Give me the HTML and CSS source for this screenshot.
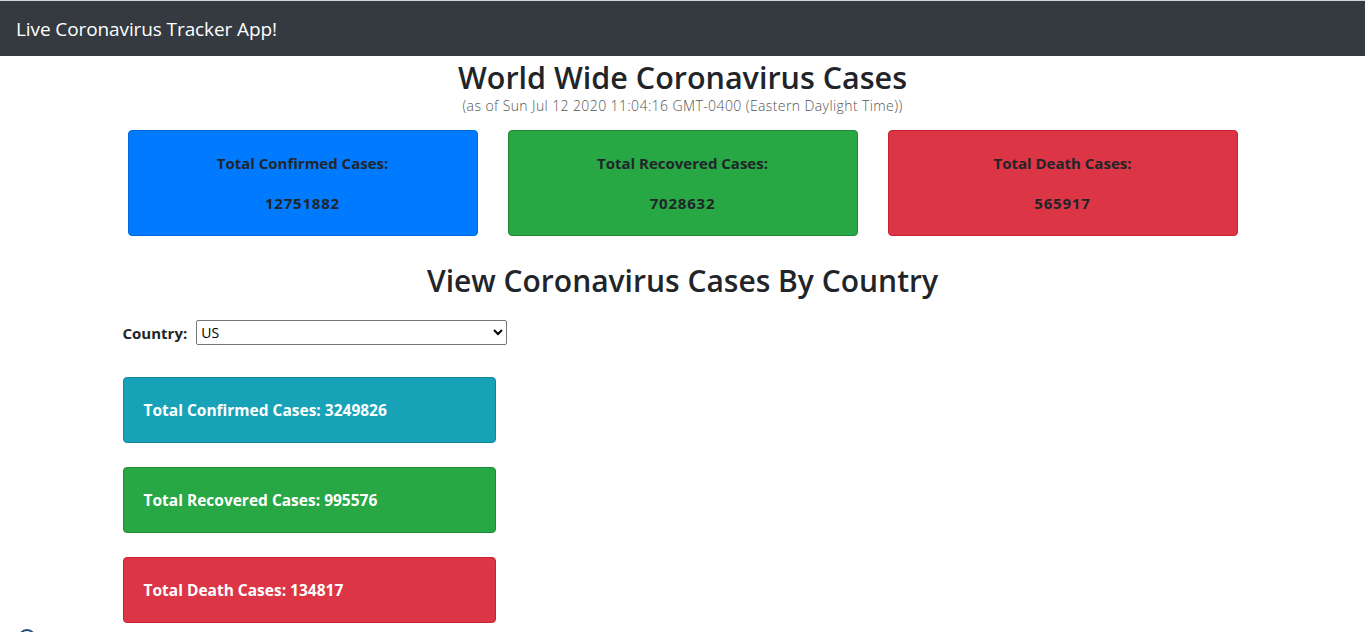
FILE: index.html
```html
<!DOCTYPE html>
<html lang="en">
<head>
<meta charset="utf-8">
<title>Live Coronavirus Tracker App!</title>
<link rel="stylesheet" href="styles.css">
</head>
<body>
<nav class="navbar">
  <span class="brand">Live Coronavirus Tracker App!</span>
</nav>
<main class="container">
  <header class="world-head">
    <h2 class="title">World Wide Coronavirus Cases</h2>
    <p class="asof">(as of Sun Jul 12 2020 11:04:16 GMT-0400 (Eastern Daylight Time))</p>
  </header>
  <section class="world-row">
    <div class="world-card primary">
      <p class="wc-label">Total Confirmed Cases:</p>
      <p class="wc-num">12751882</p>
    </div>
    <div class="world-card success">
      <p class="wc-label">Total Recovered Cases:</p>
      <p class="wc-num">7028632</p>
    </div>
    <div class="world-card danger">
      <p class="wc-label">Total Death Cases:</p>
      <p class="wc-num">565917</p>
    </div>
  </section>
  <h2 class="title country-title">View Coronavirus Cases By Country</h2>
  <section class="country">
    <div class="picker">
      <label for="country" class="picker-label">Country:</label>
      <select id="country" class="picker-select">
        <option>US</option>
      </select>
    </div>
    <div class="c-card info">Total Confirmed Cases: 3249826</div>
    <div class="c-card success">Total Recovered Cases: 995576</div>
    <div class="c-card danger">Total Death Cases: 134817</div>
  </section>
</main>
<div class="footer-dot"></div>
</body>
</html>
```
FILE: styles.css
```css
html, body {
  margin: 0;
  padding: 0;
}
body {
  font-family: "Open Sans", "Noto Sans", sans-serif;
  color: #212529;
  background: #fff;
  overflow: hidden;
  height: 632px;
}
.navbar {
  border-top: 1px solid #d4d4d4;
  background: #343a40;
  height: 55px;
  display: flex;
  align-items: center;
  padding: 0 16px;
}
.brand {
  color: #fff;
  font-size: 19px;
  letter-spacing: -0.1px;
}
.container {
  width: 1110px;
  margin: 0 auto;
}
.world-head {
  text-align: center;
  padding-top: 4px;
}
.title {
  margin: 0;
  font-size: 30.5px;
  font-weight: 600;
  line-height: 34px;
}
.asof {
  margin: 4px 0 0;
  font-size: 14px;
  font-weight: 300;
  color: #555;
  line-height: 16px;
  letter-spacing: 0.4px;
}
.world-row {
  display: grid;
  grid-template-columns: repeat(3, 350px);
  column-gap: 30px;
  margin-top: 16px;
}
.world-card {
  height: 106px;
  box-sizing: border-box;
  border-radius: 4px;
  display: flex;
  flex-direction: column;
  align-items: center;
  justify-content: center;
  gap: 22px;
  font-weight: 700;
  font-size: 15px;
}
.world-card p {
  margin: 0;
  line-height: 18px;
}
.world-card .wc-num {
  letter-spacing: 0.8px;
}
.primary { background: #007bff; border: 1px solid #0069d9; }
.success { background: #28a745; border: 1px solid #218838; }
.danger { background: #dc3545; border: 1px solid #c82333; }
.info { background: #17a2b8; border: 1px solid #138496; }
.country-title {
  text-align: center;
  margin-top: 26px;
  font-size: 30px;
  line-height: 38px;
}
.country {
  margin-left: -5px;
  padding-top: 20px;
}
.picker {
  display: flex;
  align-items: center;
  gap: 9px;
}
.picker-label {
  font-weight: 700;
  font-size: 15px;
}
.picker-select {
  width: 311px;
  height: 25px;
  font-family: "Open Sans", sans-serif;
  font-size: 14px;
  border: 1px solid #767676;
  border-radius: 2px;
  background: #fff;
  color: #000;
}
.c-card {
  width: 373px;
  height: 66px;
  box-sizing: border-box;
  margin-top: 32px;
  border-radius: 4px;
  color: #fff;
  font-weight: 700;
  font-size: 15.5px;
  display: flex;
  align-items: center;
  padding-left: 20px;
}
.country .c-card + .c-card {
  margin-top: 24px;
}
.footer-dot {
  position: absolute;
  left: 18px;
  top: 629px;
  width: 18px;
  height: 18px;
  border-radius: 50%;
  border: 2px solid #1f4e79;
  box-sizing: border-box;
}
```
